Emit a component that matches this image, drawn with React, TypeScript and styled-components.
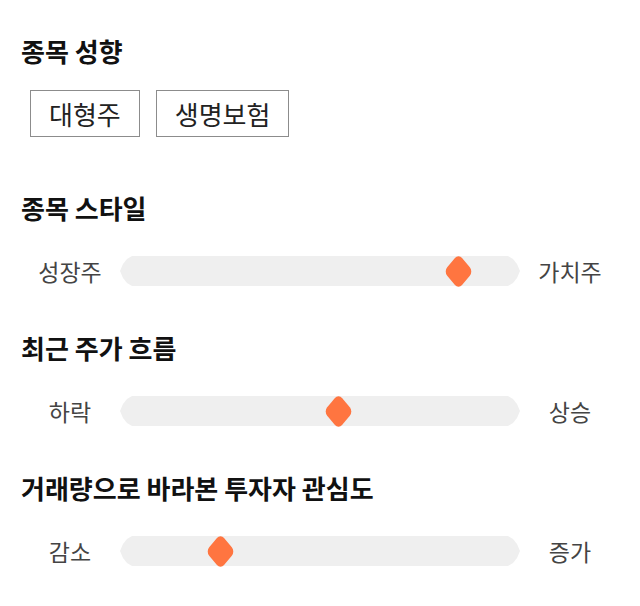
import styled, { createGlobalStyle } from 'styled-components';

const GlobalStyle = createGlobalStyle`
  html, body {
    margin: 0;
    padding: 0;
    background: #ffffff;
  }
  body {
    font-family: "Noto Sans CJK KR", "Noto Sans", sans-serif;
    color: #111111;
  }
`;

const Page = styled.div`
  width: 640px;
  box-sizing: border-box;
  padding: 35px 20px 0 20px;
`;

const Section = styled.section<{ $gapAfter: number }>`
  display: flex;
  flex-direction: column;
  margin-bottom: ${(p) => p.$gapAfter}px;
`;

const Heading = styled.h2<{ $gapBelow: number }>`
  margin: 0 0 ${(p) => p.$gapBelow}px 1px;
  font-size: 26px;
  line-height: 32px;
  font-weight: 700;
  color: #111111;
`;

const TagList = styled.div`
  display: flex;
  gap: 16px;
  padding-left: 10px;
`;

const Tag = styled.button`
  height: 47px;
  box-sizing: border-box;
  padding: 0 18px;
  border: 1px solid #8c8c8c;
  background: #ffffff;
  font-family: inherit;
  font-size: 26px;
  line-height: 45px;
  color: #222222;
  cursor: pointer;
`;

const SliderRow = styled.div`
  display: grid;
  grid-template-columns: 100px 1fr 100px;
  align-items: center;
  height: 40px;
`;

const EndLabel = styled.span`
  text-align: center;
  font-size: 23px;
  line-height: 40px;
  color: #444444;
`;

const TrackWrap = styled.div`
  position: relative;
  height: 30px;
`;

/* lens-shaped ends: two shallow arcs meeting in a point */
const Track = styled.div`
  height: 30px;
  background: #efefef;
  clip-path: polygon(
    12px 0,
    calc(100% - 12px) 0,
    calc(100% - 7px) 3px,
    calc(100% - 3px) 8px,
    100% 15px,
    calc(100% - 3px) 22px,
    calc(100% - 7px) 27px,
    calc(100% - 12px) 30px,
    12px 30px,
    7px 27px,
    3px 22px,
    0 15px,
    3px 8px,
    7px 3px
  );
`;

const Thumb = styled.div`
  position: absolute;
  top: 50%;
  width: 21px;
  height: 21px;
  margin: -10.5px 0 0 -10.5px;
  border-radius: 5px;
  background: #ff7540;
  transform: scale(1, 1.2) rotate(45deg);
`;

type SliderProps = {
  left: string;
  right: string;
  value: number;
};

function StyleSlider({ left, right, value }: SliderProps) {
  return (
    <SliderRow>
      <EndLabel>{left}</EndLabel>
      <TrackWrap role="slider" aria-valuenow={value} aria-valuemin={0} aria-valuemax={100}>
        <Track />
        <Thumb style={{ left: `${value}%` }} />
      </TrackWrap>
      <EndLabel>{right}</EndLabel>
    </SliderRow>
  );
}

const sliders = [
  { title: '종목 스타일', left: '성장주', right: '가치주', value: 84.5 },
  { title: '최근 주가 흐름', left: '하락', right: '상승', value: 54.5 },
  { title: '거래량으로 바라본 투자자 관심도', left: '감소', right: '증가', value: 25 },
];

export default function App() {
  return (
    <>
      <GlobalStyle />
      <Page>
        <Section $gapAfter={55}>
          <Heading $gapBelow={23}>종목 성향</Heading>
          <TagList>
            <Tag>대형주</Tag>
            <Tag>생명보험</Tag>
          </TagList>
        </Section>
        {sliders.map((s) => (
          <Section key={s.title} $gapAfter={41}>
            <Heading $gapBelow={27}>{s.title}</Heading>
            <StyleSlider left={s.left} right={s.right} value={s.value} />
          </Section>
        ))}
      </Page>
    </>
  );
}
